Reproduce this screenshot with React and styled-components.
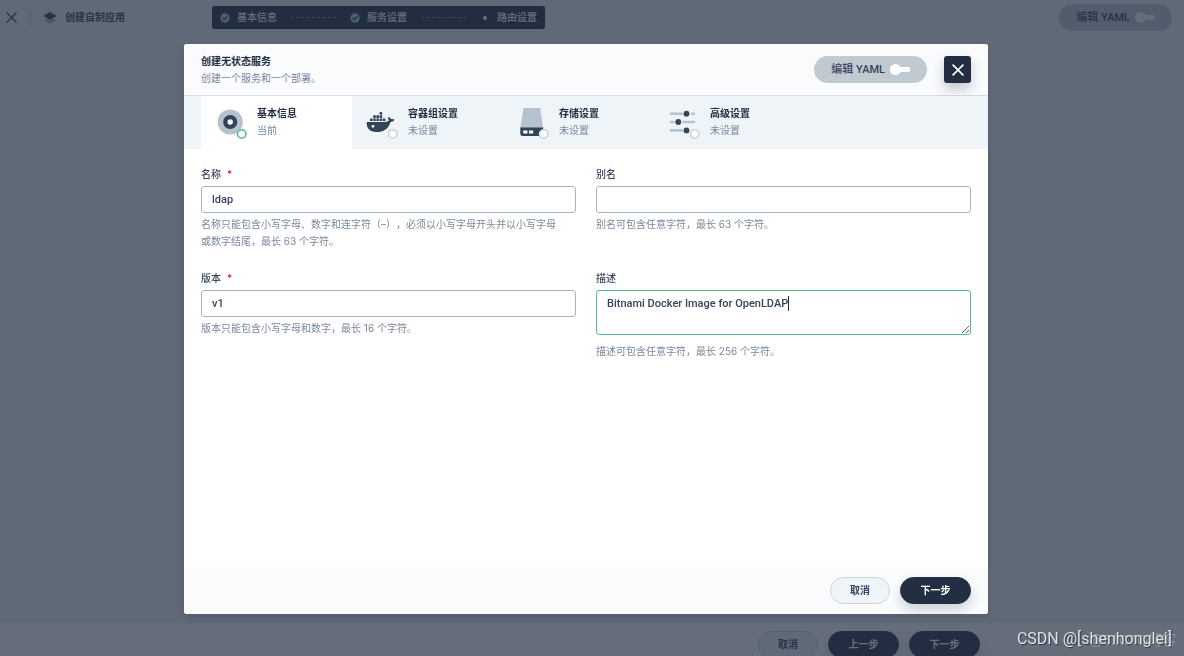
import React, { useEffect, useRef, useState } from "react";
import styled, { createGlobalStyle } from "styled-components";

const GlobalStyle = createGlobalStyle`
  * {
    box-sizing: border-box;
  }
  body {
    margin: 0;
    overflow: hidden;
    font-family: Inter, "Noto Sans CJK SC", sans-serif;
    font-size: 10px;
    line-height: 17px;
    color: #36435c;
    text-spacing-trim: space-all;
  }
  button, input, textarea {
    font-family: inherit;
    font-size: inherit;
    line-height: inherit;
    color: inherit;
  }
`;

/* ---------- page behind the dialog ---------- */

const Page = styled.div`
  height: 100vh;
  display: flex;
  flex-direction: column;
  background: #eff4f9;
  overflow: hidden;
`;

const TopBar = styled.header`
  display: flex;
  align-items: center;
  height: 35px;
  padding: 0 12px 0 5px;
`;

const PlainButton = styled.button`
  display: flex;
  padding: 0;
  border: 0;
  background: none;
  cursor: pointer;
`;

const Divider = styled.span`
  width: 1px;
  height: 16px;
  margin: 0 12px;
  background: #ccd3db;
`;

const AppTitle = styled.h1`
  flex: 0 0 148px;
  display: flex;
  align-items: center;
  gap: 8px;
  margin: 0 21px 0 0;
  font-size: 10px;
  font-weight: 700;
`;

const Steps = styled.ol`
  display: flex;
  align-items: center;
  gap: 14px;
  height: 23px;
  margin: 0 auto 0 0;
  padding: 0 8px;
  border-radius: 2px;
  background: #242e42;
  color: #fff;
  list-style: none;
`;

const Step = styled.li`
  display: flex;
  align-items: center;
  gap: 7px;
  font-weight: 500;
`;

const Dashes = styled.li`
  width: 45px;
  border-top: 1px dashed #79879c;
`;

const PageFooter = styled.footer`
  display: flex;
  justify-content: flex-end;
  gap: 10px;
  height: 35px;
  margin-top: auto;
  padding: 9px 204px 0 17px;
  border-top: 1px solid #e3e9ef;
  background: #fff;
`;

/* ---------- shared controls ---------- */

const Button = styled.button`
  flex: none;
  height: 27px;
  min-width: ${(props) => (props.$primary ? "71px" : "60px")};
  padding: 0 19px;
  border: 1px solid ${(props) => (props.$primary ? "#242e42" : "#ccd3db")};
  border-radius: 14px;
  background: ${(props) => (props.$primary ? "#242e42" : "#eff4f9")};
  color: ${(props) => (props.$primary ? "#fff" : "#36435c")};
  box-shadow: ${(props) =>
    props.$primary ? "0 6px 12px rgba(36, 46, 66, 0.2)" : "none"};
  font-weight: 700;
  cursor: pointer;
`;

const SwitchPill = styled.label`
  flex: none;
  display: flex;
  align-items: center;
  gap: 5px;
  height: 27px;
  padding: 0 17px;
  border-radius: 14px;
  background: #c1c9d1;
  font-family: Roboto, "Noto Sans CJK SC", sans-serif;
  font-size: 11px;
  font-weight: 500;
  cursor: pointer;
`;

const SwitchInput = styled.input`
  appearance: none;
  display: flex;
  align-items: center;
  width: 20px;
  height: 11px;
  margin: 0;
  background: linear-gradient(#fff, #fff) 6px 3px / 14px 5px no-repeat;
  border-radius: 6px;
  cursor: pointer;

  &::before {
    content: "";
    width: 11px;
    height: 11px;
    border-radius: 50%;
    background: #fff;
  }
  &:checked {
    justify-content: flex-end;
    background-position: 0 3px;
  }
`;

/* ---------- dialog ---------- */

const Overlay = styled.div`
  position: fixed;
  inset: 0;
  display: flex;
  justify-content: center;
  padding: 44px 12px 42px 0;
  background: rgba(36, 46, 66, 0.7);
`;

const Modal = styled.section`
  display: flex;
  flex-direction: column;
  width: calc(100% - 40px);
  max-width: 804px;
  border-radius: 3px;
  background: #fff;
  box-shadow: 0 4px 8px rgba(36, 46, 66, 0.2);
  overflow: hidden;
`;

const ModalHeader = styled.header`
  display: flex;
  align-items: center;
  gap: 17px;
  height: 52px;
  padding: 0 17px;
  border-bottom: 1px solid #d5dce3;
  background: #f9fbfd;
`;

const Heading = styled.div`
  flex: 1;
`;

const Title = styled.h2`
  margin: 0;
  font-size: 10px;
  font-weight: 700;
  color: #242e42;
`;

const Muted = styled.p`
  margin: 0;
  color: #79879c;
`;

const CloseButton = styled.button`
  display: flex;
  align-items: center;
  justify-content: center;
  width: 27px;
  height: 27px;
  padding: 0;
  border: 0;
  border-radius: 3px;
  background: #242e42;
  color: #fff;
  box-shadow: 0 6px 12px rgba(36, 46, 66, 0.25);
  cursor: pointer;
`;

const Tabs = styled.nav`
  display: flex;
  height: 53px;
  padding: 0 17px;
  background: #eff4f9;
`;

const Tab = styled.button`
  display: flex;
  align-items: center;
  gap: 10px;
  width: 151px;
  padding: 0 12px 2px;
  border: 0;
  background: ${(props) => (props.$active ? "#fff" : "transparent")};
  text-align: left;
  cursor: pointer;
`;

const TabName = styled.strong`
  display: block;
  font-weight: 700;
  color: #242e42;
`;

const TabState = styled.span`
  color: #79879c;
`;

const Form = styled.form`
  flex: 1;
  display: grid;
  grid-template-columns: 1fr 1fr;
  align-content: start;
  gap: 20px;
  padding: 17px;
`;

const Label = styled.label`
  display: block;
  margin-bottom: 3px;
  font-weight: 500;
`;

const Required = styled.span`
  margin-left: 6px;
  color: #ca2621;
`;

const TextInput = styled.input`
  display: block;
  width: 100%;
  height: 27px;
  padding: 0 10px;
  border: 1px solid #abb4be;
  border-radius: 3px;
  outline: 0;
  background: #fff;
  font-family: Roboto, "Noto Sans CJK SC", sans-serif;
  font-size: 11px;
  font-weight: 500;

  &:focus {
    border-color: #55bc8a;
  }
`;

const TextArea = styled(TextInput).attrs({ as: "textarea" })`
  height: 45px;
  margin-bottom: 8px;
  padding: 4px 10px;
  resize: vertical;
  caret-color: transparent;
`;

const CaretBox = styled.div`
  position: relative;
`;

const Caret = styled.span`
  position: absolute;
  top: 6px;
  width: 1px;
  height: 15px;
  background: #242e42;
`;

const Hint = styled.p`
  margin: 3px 12px 0 0;
  color: #79879c;
`;

const ModalFooter = styled.footer`
  display: flex;
  justify-content: flex-end;
  gap: 10px;
  padding: 10px 17px;
  background: #f9fbfd;
`;

const Watermark = styled.div`
  position: fixed;
  right: 12px;
  bottom: 6px;
  font-family: Roboto, sans-serif;
  font-size: 16px;
  line-height: 22px;
  color: #dfe1e4;
  text-shadow: 1px 1px 1px rgba(0, 0, 0, 0.5);
`;

const FaintMark = styled(Watermark)`
  right: 8px;
  bottom: 5px;
  font-family: "Liberation Sans", "Noto Sans CJK SC", sans-serif;
  font-size: 14px;
  color: rgba(255, 255, 255, 0.3);
  text-shadow: none;
`;

/* ---------- icons ---------- */

const Cross = ({ size = 13, stroke = 1.3 }) => (
  <svg width={size} height={size} viewBox="0 0 13 13" aria-hidden="true">
    <path d="M1.5 1.5l10 10M11.5 1.5l-10 10" stroke="currentColor" strokeWidth={stroke} />
  </svg>
);

const Layers = () => (
  <svg width="14" height="14" viewBox="0 0 14 14" aria-hidden="true">
    <path d="M1 8.5l6-2 6 2v1l-6 3.500-6-3.500z" fill="#abb4be" />
    <path d="M7 1l6.3 3.4v.8L7 8.800.7 5.200v-.8z" fill="#36435c" />
  </svg>
);

const CheckDot = () => (
  <svg width="10" height="10" viewBox="0 0 10 10" aria-hidden="true">
    <circle cx="5" cy="5" r="4.7" fill="#8fdcc4" />
    <path d="M2.8 5l1.6 1.5 2.8-3" fill="none" stroke="#242e42" strokeWidth="1.1" />
  </svg>
);

const SmallDot = () => (
  <svg width="10" height="10" viewBox="0 0 10 10" aria-hidden="true">
    <circle cx="5" cy="5" r="2" fill="#fff" />
  </svg>
);

const TabIcon = ({ active, children }) => (
  <svg width="34" height="34" viewBox="0 0 34 34" aria-hidden="true">
    {children}
    <circle cx="28.7" cy="29" r="4.2" fill="#fff" stroke={active ? "#55bc8a" : "#ccd3db"} strokeWidth="1.6" />
  </svg>
);

const DiscShape = () => (
  <>
    <circle cx="17.2" cy="17" r="12.6" fill="#b6c2cd" />
    <circle cx="17.2" cy="17" r="7.1" fill="#324558" />
    <circle cx="17.2" cy="17" r="2.7" fill="#fff" />
  </>
);

const WhaleShape = () => (
  <>
    <g fill="#324558">
      <path d="M15.600 7.100h2.600v2.600h-2.600z" />
      <path d="M9.200 10.300h2.600v2.600H9.200zM12.400 10.300H15v2.600h-2.600zM15.600 10.300h2.600v2.600h-2.600z" />
      <path d="M6 13.500h2.600v2.600H6zM9.200 13.500h2.600v2.600H9.200zM12.400 13.500H15v2.600h-2.600zM15.600 13.500h2.600v2.600h-2.600zM18.800 13.500h2.600v2.600h-2.600z" />
      <path d="M2.700 17h18.200c1.900 0 3.300-.5 4.100-1.400-1-1-1.100-2.600-.3-3.900 1.200.5 1.900 1.400 2.100 2.400 1.300-.3 2.700-.1 3.800.4-.6 1.500-2 2.300-4.100 2.400C24.400 23.600 20 27 12.400 27 5.600 27 2.400 23.300 2.700 17z" />
    </g>
    <circle cx="9" cy="21.300" r="1.400" fill="#eff4f9" />
  </>
);

const DiskShape = () => (
  <>
    <path d="M8.600 3h16.600L28.200 23H5.300z" fill="#b6c2cd" />
    <path d="M5.300 22.600h22.900v6.200a2.200 2.200 0 0 1-2.200 2.200H7.500a2.200 2.200 0 0 1-2.200-2.200z" fill="#324558" />
    <path d="M8.200 25.600h4.200v2.800H8.200zM14 25.600h4.200v2.800H14z" fill="#fff" />
  </>
);

const SlidersShape = () => (
  <>
    <path
      d="M5 8.7h11M26 8.700h2M5 17h2.500M17.500 17H28M5 25.400h11"
      stroke="#b6c2cd"
      strokeWidth="2.6"
      strokeLinecap="round"
    />
    <g fill="#324558">
      <circle cx="20.500" cy="8.700" r="2.900" />
      <circle cx="12.300" cy="17" r="2.900" />
      <circle cx="20.500" cy="25.400" r="2.900" />
    </g>
  </>
);

const tabs = [
  { name: "基本信息", state: "当前", Shape: DiscShape, active: true },
  { name: "容器组设置", state: "未设置", Shape: WhaleShape },
  { name: "存储设置", state: "未设置", Shape: DiskShape },
  { name: "高级设置", state: "未设置", Shape: SlidersShape },
];

const YamlSwitch = () => (
  <SwitchPill>
    编辑 YAML
    <SwitchInput type="checkbox" />
  </SwitchPill>
);

function Field({ id, label, required, hint, children }) {
  return (
    <div>
      <Label htmlFor={id}>
        {label}
        {required && <Required>*</Required>}
      </Label>
      {children}
      <Hint>{hint}</Hint>
    </div>
  );
}

// Text area with a solid caret that does not blink
function DescriptionArea({ id }) {
  const area = useRef(null);
  const [value, setValue] = useState("Bitnami Docker Image for OpenLDAP");
  const [left, setLeft] = useState(0);

  useEffect(() => {
    area.current.focus();
  }, []);

  useEffect(() => {
    const css = getComputedStyle(area.current);
    const ctx = document.createElement("canvas").getContext("2d");
    ctx.font = `${css.fontWeight} ${css.fontSize} ${css.fontFamily}`;
    setLeft(Math.round(ctx.measureText(value).width) + 11);
  }, [value]);

  return (
    <CaretBox>
      <TextArea
        id={id}
        ref={area}
        spellCheck={false}
        value={value}
        onChange={(e) => setValue(e.target.value)}
      />
      <Caret style={{ left }} />
    </CaretBox>
  );
}

function CreateAppPage() {
  return (
    <Page>
      <TopBar>
        <PlainButton type="button" aria-label="关闭">
          <Cross />
        </PlainButton>
        <Divider />
        <AppTitle>
          <Layers />
          创建自制应用
        </AppTitle>
        <Steps>
          <Step>
            <CheckDot />
            基本信息
          </Step>
          <Dashes />
          <Step>
            <CheckDot />
            服务设置
          </Step>
          <Dashes />
          <Step>
            <SmallDot />
            路由设置
          </Step>
        </Steps>
        <YamlSwitch />
      </TopBar>
      <PageFooter>
        <Button type="button">取消</Button>
        <Button type="button" $primary>上一步</Button>
        <Button type="button" $primary>下一步</Button>
      </PageFooter>
    </Page>
  );
}

function CreateServiceModal() {
  return (
    <Modal role="dialog" aria-labelledby="modal-title">
      <ModalHeader>
        <Heading>
          <Title id="modal-title">创建无状态服务</Title>
          <Muted>创建一个服务和一个部署。</Muted>
        </Heading>
        <YamlSwitch />
        <CloseButton type="button" aria-label="关闭">
          <Cross size={14} stroke={1.6} />
        </CloseButton>
      </ModalHeader>
      <Tabs>
        {tabs.map(({ name, state, Shape, active }) => (
          <Tab key={name} type="button" $active={active}>
            <TabIcon active={active}>
              <Shape />
            </TabIcon>
            <span>
              <TabName>{name}</TabName>
              <TabState>{state}</TabState>
            </span>
          </Tab>
        ))}
      </Tabs>
      <Form>
        <Field
          id="name"
          label="名称"
          required
          hint="名称只能包含小写字母、数字和连字符（–），必须以小写字母开头并以小写字母或数字结尾，最长 63 个字符。"
        >
          <TextInput id="name" defaultValue="ldap" />
        </Field>
        <Field id="alias" label="别名" hint="别名可包含任意字符，最长 63 个字符。">
          <TextInput id="alias" />
        </Field>
        <Field id="version" label="版本" required hint="版本只能包含小写字母和数字，最长 16 个字符。">
          <TextInput id="version" defaultValue="v1" />
        </Field>
        <Field id="description" label="描述" hint="描述可包含任意字符，最长 256 个字符。">
          <DescriptionArea id="description" />
        </Field>
      </Form>
      <ModalFooter>
        <Button type="button">取消</Button>
        <Button type="button" $primary>下一步</Button>
      </ModalFooter>
    </Modal>
  );
}

export default function App() {
  return (
    <>
      <GlobalStyle />
      <CreateAppPage />
      <Overlay>
        <CreateServiceModal />
      </Overlay>
      <FaintMark>@51CTO博客</FaintMark>
      <Watermark>CSDN @[shenhonglei]</Watermark>
    </>
  );
}
